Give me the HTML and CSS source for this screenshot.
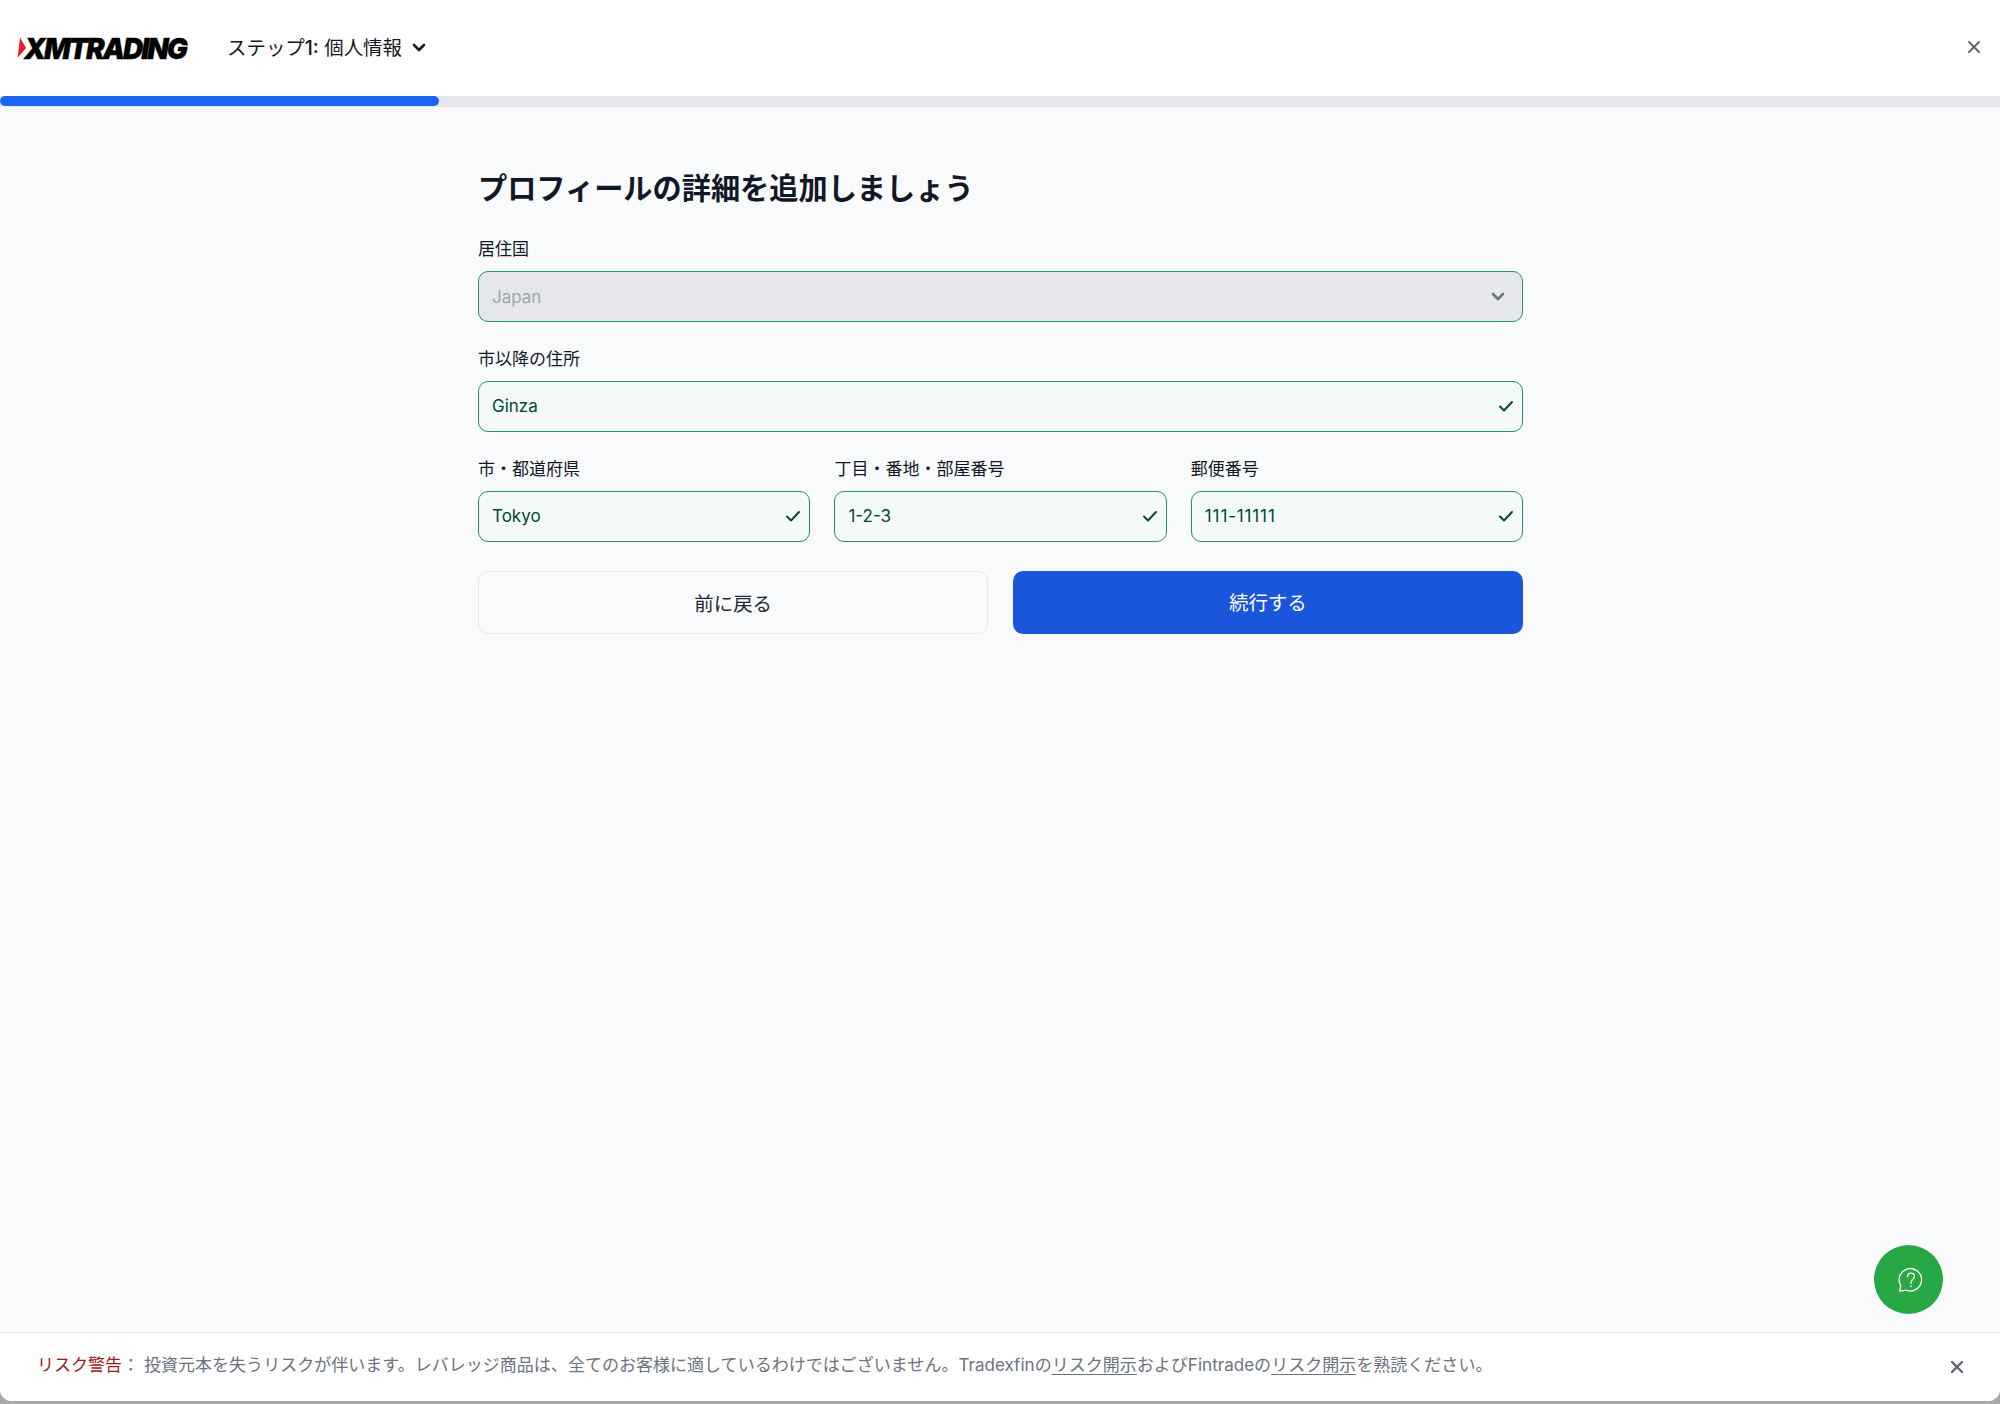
FILE: index.html
```html
<!DOCTYPE html>
<html lang="ja">
<head>
<meta charset="utf-8">
<title>XMTrading</title>
<link rel="stylesheet" href="styles.css">
</head>
<body>
<div class="window">
  <header class="header">
    <svg class="logo" viewBox="0 0 174 26">
      <path d="M3 1.500 L9 12 L.7 21.800 Z" fill="#ed1c24"/>
      <text class="logo-text" x="7" y="22.500" textLength="162" lengthAdjust="spacingAndGlyphs">XMTRADING</text>
    </svg>
    <button class="step"><span>ステップ<span class="step-number">1:</span> 個人情報</span>
      <svg class="step-chevron" viewBox="0 0 14 10"><path d="M2 2l5 5 5-5"/></svg>
    </button>
    <button class="icon-button" aria-label="閉じる">
      <svg class="close" viewBox="0 0 12 12"><path d="M1 1l10 10M11 1L1 11"/></svg>
    </button>
  </header>
  <div class="progress"><div class="progress-bar"></div></div>
  <main class="main">
    <form class="form">
      <h1 class="title">プロフィールの詳細を追加しましょう</h1>
      <div class="field">
        <label class="label">居住国</label>
        <div class="input input-disabled"><span>Japan</span><svg class="select-chevron" viewBox="0 0 14 10"><path d="M2 2l5 5 5-5"/></svg></div>
      </div>
      <div class="field">
        <label class="label">市以降の住所</label>
        <div class="input"><span>Ginza</span><svg class="check" viewBox="0 0 16 12"><path d="M2 6.500l4 4L14 2"/></svg></div>
      </div>
      <div class="columns">
        <div class="field">
          <label class="label">市・都道府県</label>
          <div class="input"><span>Tokyo</span><svg class="check" viewBox="0 0 16 12"><path d="M2 6.500l4 4L14 2"/></svg></div>
        </div>
        <div class="field">
          <label class="label">丁目・番地・部屋番号</label>
          <div class="input"><span>1-2-3</span><svg class="check" viewBox="0 0 16 12"><path d="M2 6.500l4 4L14 2"/></svg></div>
        </div>
        <div class="field">
          <label class="label">郵便番号</label>
          <div class="input"><span class="postal">111-11111</span><svg class="check" viewBox="0 0 16 12"><path d="M2 6.500l4 4L14 2"/></svg></div>
        </div>
      </div>
      <div class="actions">
        <button type="button" class="button button-secondary">前に戻る</button>
        <button type="button" class="button button-primary">続行する</button>
      </div>
    </form>
  </main>
  <footer class="risk">
    <p class="risk-text"><span class="risk-label">リスク警告</span>： <span class="risk-body">投資元本を失うリスクが伴います。レバレッジ商品は、全てのお客様に適しているわけではございません。Tradexfinの<a class="link">リスク開示</a>およびFintradeの<a class="link">リスク開示</a>を熟読ください。</span></p>
    <svg class="close close-bold" viewBox="0 0 12 12"><path d="M1 1l10 10M11 1L1 11"/></svg>
  </footer>
  <button class="help" aria-label="ヘルプ">
    <svg class="help-icon" viewBox="0 0 24 24">
      <path d="M.8 23.200L1.700 17.500A11.200 11.200 0 1 1 7 22.100Q4 22.500 .8 23.200Z"/>
      <path d="M8.600 8.500C8.700 6.300 10 5.200 12 5.200s3.400 1.300 3.400 3.200c0 2.800-3.400 3.200-3.400 6.200v.8"/>
      <circle cx="12" cy="18.300" r=".9" class="help-dot"/>
    </svg>
  </button>
</div>
</body>
</html>
```
FILE: styles.css
```css
* { box-sizing: border-box; }
body {
  margin: 0;
  height: 1404px;
  background: #a9a9a9;
  color: #111827;
  font-family: Inter, "Noto Sans CJK JP", sans-serif;
  font-size: 17px;
  overflow: hidden;
}
button { font: inherit; color: inherit; background: none; border: 0; padding: 0; }
svg { display: block; fill: none; stroke: currentColor; stroke-linecap: round; stroke-linejoin: round; flex: none; }

.window {
  position: relative;
  display: flex;
  flex-direction: column;
  height: 1401px;
  background: #f9fafc;
  border-radius: 0 0 12px 12px;
  overflow: hidden;
}
.header {
  display: flex;
  align-items: center;
  height: 96px;
  flex: none;
  padding: 0 20px 2px 17px;
  background: #fff;
}
.logo { width: 174px; height: 26px; margin-top: 3px; overflow: visible; stroke: none; }
.logo-text {
  font-family: Inter, sans-serif;
  font-size: 29px;
  font-weight: 900;
  font-style: italic;
  letter-spacing: -2px;
  fill: #000;
  stroke: #000;
  stroke-width: 0.300px;
  stroke-linejoin: miter;
}
.step {
  display: flex;
  align-items: center;
  gap: 10px;
  margin: -2px 0 0 36px;
  font-size: 19.460px;
  white-space: nowrap;
}
.step-number { font-weight: 500; }
.step-chevron { width: 14px; height: 10px; margin-top: 4px; stroke-width: 2.600px; }
.icon-button { margin-left: auto; color: #5f6673; }
.close { width: 12px; height: 12px; stroke-width: 1.900px; }
.close-bold { color: #5f6673; stroke-width: 2.400px; }
.progress { height: 11px; background: #e5e7eb; flex: none; }
.progress-bar { width: 439px; height: 10px; background: #1c64f2; border-radius: 5px; }

.main { flex: 1; display: flex; justify-content: center; }
.form { width: 1045px; margin-left: 1px; padding-top: 61px; }
.title { margin: 0; font-size: 29.200px; line-height: 42px; font-weight: 700; white-space: nowrap; }
.field { margin-top: 24.900px; }
.title + .field { margin-top: 27px; }
.label { display: block; height: 24px; line-height: 24px; margin-bottom: 10px; font-weight: 400; }
.input {
  display: flex;
  align-items: center;
  justify-content: space-between;
  height: 51px;
  padding: 0 8px 0 13px;
  border: 1px solid #1f9568;
  border-radius: 10px;
  background: #f3faf7;
  color: #014737;
}
.input-disabled { background: #e5e7eb; color: #9ca3af; padding-right: 17px; }
.postal { letter-spacing: 0.850px; }
.select-chevron { width: 14px; height: 10px; stroke-width: 2.600px; color: #6b7280; }
.check { width: 16px; height: 12px; stroke-width: 1.900px; }
.columns { display: grid; grid-template-columns: repeat(3, 1fr); gap: 24.300px; }
.actions { display: grid; grid-template-columns: 1fr 1fr; gap: 24.300px; margin-top: 29.500px; }
.button { height: 63px; border-radius: 10px; font-size: 19.460px; font-weight: 400; }
.button-secondary { border: 1px solid #e5e7eb; color: #1f2937; }
.button-primary { background: #1a56db; color: #fff; padding-bottom: 2px; }

.risk {
  display: flex;
  align-items: center;
  justify-content: space-between;
  height: 69px;
  padding: 0 37px;
  border-top: 1px solid #e5e7eb;
  background: #fff;
  color: #6b7280;
}
.risk-text { margin: 0 0 5px; line-height: 24px; white-space: nowrap; letter-spacing: 0.025px; }
.risk-label { color: #9b1c1c; }
.link { text-decoration: underline; text-underline-offset: 3px; }

.help {
  position: absolute;
  left: 1874px;
  top: 1245px;
  display: grid;
  place-items: center;
  width: 69px;
  height: 69px;
  padding-left: 4px;
  border-radius: 50%;
  background: #28a745;
  color: #fff;
}
.help-icon { width: 24px; height: 24px; stroke-width: 1.300px; overflow: visible; }
.help-dot { fill: #fff; stroke: none; }
```
